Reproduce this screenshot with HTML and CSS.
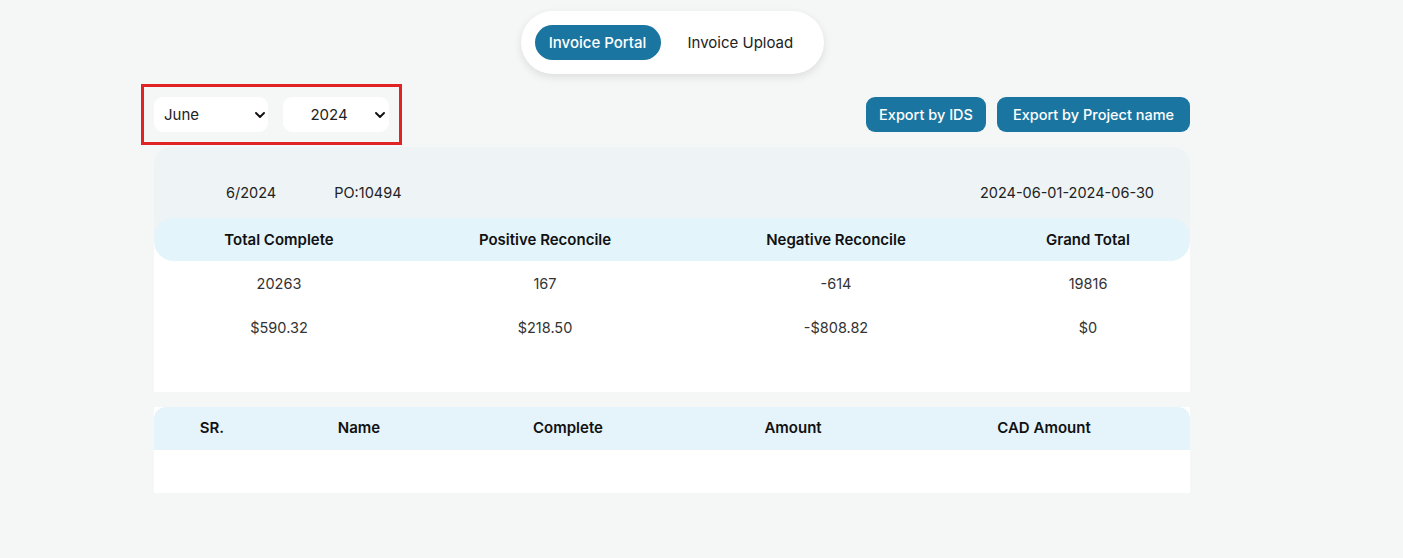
FILE: index.html
```html
<!DOCTYPE html>
<html>
<head>
<meta charset="utf-8">
<title>Invoice Portal</title>
<link rel="stylesheet" href="styles.css">
</head>
<body>
<div class="page">
  <div class="toggle-row">
    <div class="toggle">
      <button class="tab active">Invoice Portal</button>
      <button class="tab upload">Invoice Upload</button>
    </div>
  </div>

  <div class="toolbar">
    <div class="filters">
      <div class="select-wrap month">
        <select class="select"><option>June</option></select>
        <svg class="chev" viewBox="0 0 10 6" width="10" height="6"><path d="M1 1l4 4 4-4" fill="none" stroke="#111" stroke-width="1.9" stroke-linecap="round" stroke-linejoin="round"/></svg>
      </div>
      <div class="select-wrap year">
        <select class="select center"><option>2024</option></select>
        <svg class="chev" viewBox="0 0 10 6" width="10" height="6"><path d="M1 1l4 4 4-4" fill="none" stroke="#111" stroke-width="1.9" stroke-linecap="round" stroke-linejoin="round"/></svg>
      </div>
    </div>
    <div class="exports">
      <button class="btn ids">Export by IDS</button>
      <button class="btn proj">Export by Project name</button>
    </div>
  </div>

  <div class="card">
    <div class="info">
      <span class="period">6/2024</span>
      <span class="po">PO:10494</span>
      <span class="range">2024-06-01-2024-06-30</span>
    </div>
    <div class="head-wrap">
      <div class="summary-head">
        <div class="c1">Total Complete</div>
        <div class="c2">Positive Reconcile</div>
        <div class="c3">Negative Reconcile</div>
        <div class="c4">Grand Total</div>
      </div>
    </div>
    <div class="summary-row">
      <div class="c1">20263</div>
      <div class="c2">167</div>
      <div class="c3">-614</div>
      <div class="c4">19816</div>
    </div>
    <div class="summary-row">
      <div class="c1">$590.32</div>
      <div class="c2">$218.50</div>
      <div class="c3">-$808.82</div>
      <div class="c4">$0</div>
    </div>
    <div class="card-foot"></div>
  </div>

  <div class="list">
    <div class="list-head">
      <div class="l1">SR.</div>
      <div class="l2">Name</div>
      <div class="l3">Complete</div>
      <div class="l4">Amount</div>
      <div class="l5">CAD Amount</div>
    </div>
    <div class="list-body"></div>
  </div>
</div>
</body>
</html>
```

FILE: styles.css
```css
* { box-sizing: border-box; }
html, body { margin: 0; padding: 0; }
body {
  background: #f5f6f6;
  font-family: Inter, "Noto Sans", "DejaVu Sans", sans-serif;
  color: #222;
  height: 558px;
}
.page {
  width: 1036px;
  margin-left: 154px;
  padding-top: 11px;
}
.toggle-row { display: flex; justify-content: center; }
.toggle {
  display: flex;
  width: 303px;
  height: 63px;
  padding: 14px;
  background: #fff;
  border-radius: 32px;
  box-shadow: 0 3px 8px rgba(0,0,0,0.10);
}
.tab {
  border: 0;
  background: transparent;
  font-family: inherit;
  font-size: 15px;
  color: #222;
  height: 35px;
  padding: 0 14px;
  border-radius: 18px;
  cursor: pointer;
  white-space: nowrap;
}
.tab.active {
  background: #1a76a1;
  color: #fff;
  font-weight: 500;
  width: 126px;
  padding: 0;
}
.tab.upload { flex: 1; text-align: left; padding: 0 0 0 27px; }

.toolbar {
  display: flex;
  justify-content: space-between;
  align-items: center;
  margin-top: 23px;
}
.filters {
  display: flex;
  gap: 15px;
  outline: 3px solid #e02424;
  outline-offset: 10px;
}
.select-wrap { position: relative; height: 35px; }
.select-wrap.month { width: 114px; }
.select-wrap.year { width: 106px; }
.select {
  appearance: none;
  -webkit-appearance: none;
  width: 100%;
  height: 35px;
  border: 0;
  border-radius: 9px;
  background: #fff;
  font-family: inherit;
  font-size: 15px;
  color: #222;
  padding: 0 10px;
  outline: none;
}
.select.center { text-align: center; text-align-last: center; padding-right: 24px; }
.chev { position: absolute; right: 3px; top: 15px; pointer-events: none; }
.select-wrap.year .chev { right: 4px; }

.exports { display: flex; gap: 11px; }
.btn {
  height: 35px;
  border: 0;
  border-radius: 9px;
  background: #1a76a1;
  color: #fff;
  font-family: inherit;
  font-size: 14.5px;
  font-weight: 500;
  padding: 0;
  cursor: pointer;
}
.btn.ids { width: 120px; }
.btn.proj { width: 193px; }

.card {
  margin-top: 15px;
  background: #fff;
  border-radius: 16px 16px 0 0;
  overflow: hidden;
}
.info {
  display: flex;
  align-items: center;
  height: 71px;
  padding: 20px 36px 0 72px;
  background: #eef3f5;
  font-size: 14.5px;
  color: #222;
}
.po { margin-left: 58px; }
.range { margin-left: auto; }
.head-wrap { background: linear-gradient(#eef3f5 50%, #fff 50%); }
.summary-head, .summary-row { display: flex; }
.summary-head {
  height: 43px;
  align-items: center;
  background: #e3f4fb;
  border-radius: 20px;
  font-size: 15px;
  font-weight: 600;
  color: #111;
}
.summary-row {
  height: 44px;
  align-items: center;
  font-size: 14.5px;
  color: #333;
}
.c1, .c2, .c3, .c4 { text-align: center; }
.c1 { width: 250px; }
.c2 { width: 282px; }
.c3 { width: 300px; }
.c4 { width: 204px; }
.card-foot { height: 43px; }

.list { margin-top: 15px; background: #fff; }
.list-head {
  display: flex;
  align-items: center;
  height: 43px;
  padding-bottom: 2px;
  background: #e5f3fb;
  border-radius: 12px 12px 0 0;
  font-size: 15px;
  font-weight: 600;
  color: #111;
}
.list-head > div { text-align: center; }
.l1 { width: 116px; }
.l2 { width: 178px; }
.l3 { width: 240px; }
.l4 { width: 210px; }
.l5 { width: 292px; }
.list-body { height: 43px; }
```
